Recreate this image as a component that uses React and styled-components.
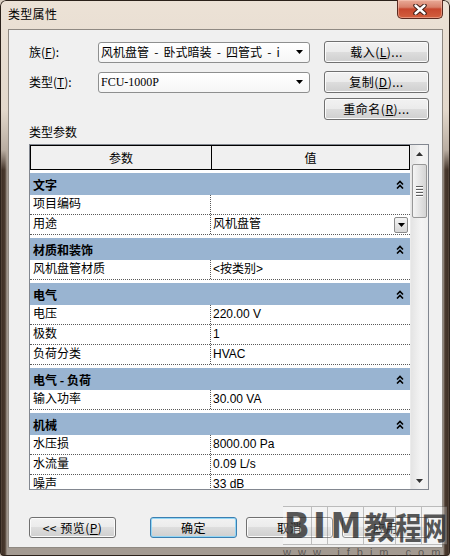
import React from 'react'
import styled, { createGlobalStyle } from 'styled-components'

const GlobalStyle = createGlobalStyle`
  html, body {
    margin: 0;
    padding: 0;
    background: #d9cec1;
  }
  body {
    width: 450px;
    height: 556px;
    overflow: hidden;
    font-family: "Noto Sans CJK SC", "Liberation Sans", sans-serif;
    font-size: 12px;
    color: #000;
  }
`

const Window = styled.div`
  position: relative;
  width: 450px;
  height: 556px;
  box-sizing: border-box;
  overflow: hidden;
  display: flex;
  flex-direction: column;
  padding: 0 7px 8px 8px;
  border-radius: 6px 6px 4px 4px;
  background:
    linear-gradient(to bottom, #ece2d6 0, #e3d8cb 110px, #b9ada1 150px, rgba(74, 58, 46, 0) 170px),
    linear-gradient(to right, #8a7a6c 0, #3f3026 2px, #4b3b2f 5px, #a39a91 7px, #a39a91 443px, #4b3b2f 445px, #3f3026 448px, #8a7a6c 450px);
  box-shadow: inset 0 0 0 1px #2b211a;
`

const TitleBar = styled.div`
  height: 29px;
  flex: none;
  display: flex;
  align-items: flex-start;
  justify-content: space-between;
`

const Title = styled.div`
  margin-top: 6px;
  line-height: 16px;
  font-size: 12px;
  letter-spacing: 0.3px;
  color: #000;
`

const CloseButton = styled.div`
  width: 46px;
  height: 19px;
  box-sizing: border-box;
  display: flex;
  align-items: center;
  justify-content: center;
  border: 1px solid #5a2a20;
  border-top: none;
  border-radius: 0 0 5px 5px;
  background: linear-gradient(to bottom, #e9ab98 0, #d8806a 40%, #c7472e 50%, #d2603f 100%);
  box-shadow: inset 0 0 0 1px rgba(255, 210, 195, 0.45);
`

const Client = styled.div`
  flex: 1;
  display: flex;
  flex-direction: column;
  background: #f0f0f0;
  border: 1px solid #8f8982;
  padding: 11px 13px 9px 20px;
`

const FormRow = styled.div`
  display: flex;
  align-items: center;
  height: 22px;
  margin-bottom: ${p => p.$gap}px;
`

const Label = styled.div`
  width: 69px;
  flex: none;
  font-size: 12px;
  line-height: 16px;
`

const Combo = styled.div`
  width: 212px;
  height: 21px;
  box-sizing: border-box;
  display: flex;
  align-items: center;
  justify-content: space-between;
  padding: 0 6px 0 2px;
  border: 1px solid #8e8f8f;
  border-radius: 3px;
  background: linear-gradient(to bottom, #ffffff 0, #f6f6f6 100%);
`

const ComboText = styled.span`
  flex: 1;
  overflow: hidden;
  white-space: pre;
  font-family: ${p => (p.$serif ? '"Liberation Serif", "Noto Sans CJK SC", serif' : '"Noto Sans CJK SC", sans-serif')};
  font-size: 12px;
  word-spacing: 2.5px;
  line-height: 16px;
`

const Button = styled.div`
  width: ${p => p.$w}px;
  height: ${p => p.$h || 22}px;
  box-sizing: border-box;
  flex: none;
  display: flex;
  align-items: center;
  justify-content: center;
  margin-left: ${p => p.$ml || 0}px;
  border: 1px solid ${p => (p.$default ? '#3c7fb1' : '#707070')};
  border-radius: 3px;
  background: linear-gradient(to bottom, #f2f2f2 0, #ebebeb 50%, #dddddd 50%, #cfcfcf 100%);
  box-shadow: inset 0 0 0 1px ${p => (p.$default ? '#92d6f5' : '#fbfbfb')};
  font-size: 12px;
  line-height: 16px;
  letter-spacing: 0.5px;
`

const SectionLabel = styled.div`
  margin: 4px 0 4px 0;
  line-height: 16px;
  font-size: 12px;
`

const TableFrame = styled.div`
  width: 400px;
  height: 346px;
  box-sizing: border-box;
  flex: none;
  display: flex;
  border: 1px solid #828790;
  background: #fff;
`

const Grid = styled.div`
  width: 381px;
  display: flex;
  flex-direction: column;
`

const Header = styled.div`
  height: 25px;
  box-sizing: border-box;
  flex: none;
  display: flex;
  border: 1px solid #000;
  border-right: none;
  background: #f0f0f0;
`

const HeaderCell = styled.div`
  width: ${p => (p.$w ? `${p.$w}px` : 'auto')};
  flex: ${p => (p.$w ? 'none' : '1')};
  box-sizing: border-box;
  border-right: 1px solid #000;
  text-align: center;
  line-height: 23px;
  font-size: 12px;
`

const Body = styled.div`
  flex: 1;
  overflow: hidden;
  display: flex;
  flex-direction: column;
  font-family: "Liberation Sans", "Noto Sans CJK SC", sans-serif;
`

const Group = styled.div`
  flex: none;
  margin-top: 3px;
  height: 22px;
  display: flex;
  align-items: center;
  justify-content: space-between;
  padding: 0 6px 0 3px;
  background: #99b4d1;
  font-family: "Noto Sans CJK SC", sans-serif;
  font-weight: bold;
  font-size: 12px;
`

const Row = styled.div`
  flex: none;
  height: 20px;
  box-sizing: border-box;
  display: flex;
  border-bottom: 1px dotted #5a5a5a;
`

const NameCell = styled.div`
  width: 181px;
  box-sizing: border-box;
  flex: none;
  padding-left: 3px;
  border-right: 1px dotted #5a5a5a;
  line-height: 19px;
  font-size: 12px;
`

const ValueCell = styled.div`
  flex: 1;
  display: flex;
  align-items: center;
  justify-content: space-between;
  padding-left: 2px;
  padding-right: 2px;
  font-size: 12px;
  line-height: 19px;
`

const DropButton = styled.div`
  width: 14px;
  height: 16px;
  box-sizing: border-box;
  display: flex;
  align-items: center;
  justify-content: center;
  border: 1px solid #8b8b8b;
  border-radius: 2px;
  background: linear-gradient(to bottom, #f4f4f4, #d6d6d6);
`

const ScrollBar = styled.div`
  width: 17px;
  display: flex;
  flex-direction: column;
  border-left: 1px solid #ececec;
  background: linear-gradient(to right, #e4e4e4, #f4f4f4 60%, #efefef);
`

const ScrollArrow = styled.div`
  height: 17px;
  flex: none;
  display: flex;
  align-items: center;
  justify-content: center;
`

const Track = styled.div`
  flex: 1;
`

const Thumb = styled.div`
  margin: 2px 1px 0 1px;
  height: 54px;
  box-sizing: border-box;
  display: flex;
  flex-direction: column;
  align-items: center;
  justify-content: center;
  gap: 2px;
  border: 1px solid #979797;
  border-radius: 2px;
  background: linear-gradient(to right, #f4f4f4, #e6e6e6 45%, #d4d4d4);
`

const Grip = styled.div`
  width: 7px;
  height: 1px;
  background: #5e5e5e;
  box-shadow: 0 1px 0 #fff;
`

const Footer = styled.div`
  margin-top: 27px;
  display: flex;
  justify-content: space-between;
`

const ButtonGroup = styled.div`
  display: flex;
  gap: 9px;
`

const Watermark = styled.div`
  position: absolute;
  left: 283px;
  top: 506px;
  width: 164px;
  pointer-events: none;
`

const MarkRow = styled.div`
  display: flex;
  height: 37px;
  border-top: 1px solid rgba(90, 90, 90, 0.35);
  border-bottom: 1px solid rgba(90, 90, 90, 0.35);
`

const MarkCell = styled.div`
  width: ${p => p.$w}px;
  flex: none;
  box-sizing: border-box;
  border-right: 1px solid rgba(90, 90, 90, 0.35);
  background: rgba(255, 255, 255, 0.25);
  display: flex;
  align-items: center;
  justify-content: center;
  overflow: visible;
  color: rgba(35, 35, 35, 0.75);
  font-weight: bold;
  font-family: ${p => (p.$latin ? '"DejaVu Sans", "Liberation Sans", sans-serif' : '"Noto Sans CJK SC", sans-serif')};
  font-size: ${p => (p.$latin ? 36 : 31)}px;
  line-height: 37px;
  white-space: nowrap;
`

const Glyph = styled.span`
  display: inline-block;
  transform: scaleX(${p => p.$sx || 1});
`

const MarkUrl = styled.div`
  font-family: "Liberation Sans", sans-serif;
  font-size: 11px;
  letter-spacing: 7px;
  white-space: nowrap;
  color: rgba(60, 60, 60, 0.7);
  line-height: 12px;
  margin-top: 1px;
`

const Chevrons = () => (
  <svg width="8" height="9" viewBox="0 0 8 9">
    <polyline points="1,4.5 4,1.5 7,4.5" fill="none" stroke="#000" strokeWidth="1.6" />
    <polyline points="1,8.5 4,5.5 7,8.5" fill="none" stroke="#000" strokeWidth="1.6" />
  </svg>
)

const Tri = ({ up, color = '#000' }) => (
  <svg width="7" height="4" viewBox="0 0 7 4">
    <polygon points={up ? '0,4 7,4 3.5,0' : '0,0 7,0 3.5,4'} fill={color} />
  </svg>
)

const CloseX = () => (
  <svg width="14" height="11" viewBox="0 0 14 11">
    <path d="M2.5 1.5 L11.5 9.5 M11.5 1.5 L2.5 9.5" stroke="#3b1a14" strokeWidth="4.4" strokeLinecap="round" />
    <path d="M2.5 1.5 L11.5 9.5 M11.5 1.5 L2.5 9.5" stroke="#fff" strokeWidth="2.4" strokeLinecap="round" />
  </svg>
)

const groups = [
  {
    title: '文字',
    rows: [
      { name: '项目编码', value: '' },
      { name: '用途', value: '风机盘管', drop: true },
    ],
  },
  { title: '材质和装饰', rows: [{ name: '风机盘管材质', value: '<按类别>' }] },
  {
    title: '电气',
    rows: [
      { name: '电压', value: '220.00 V' },
      { name: '极数', value: '1' },
      { name: '负荷分类', value: 'HVAC' },
    ],
  },
  { title: '电气 - 负荷', rows: [{ name: '输入功率', value: '30.00 VA' }] },
  {
    title: '机械',
    rows: [
      { name: '水压损', value: '8000.00 Pa' },
      { name: '水流量', value: '0.09 L/s' },
      { name: '噪声', value: '33 dB' },
    ],
  },
]

const marks = [
  { ch: 'B', w: 29, latin: true, sx: 0.95 },
  { ch: 'I', w: 16, latin: true },
  { ch: 'M', w: 36, latin: true, sx: 0.85 },
  { ch: '教', w: 32 },
  { ch: '程', w: 26, sx: 0.85 },
  { ch: '网', w: 25, sx: 0.8 },
]

const App = () => {
  return (
    <>
      <GlobalStyle />
      <Window>
        <TitleBar>
          <Title>类型属性</Title>
          <CloseButton>
            <CloseX />
          </CloseButton>
        </TitleBar>

        <Client>
          <FormRow $gap={8}>
            <Label>族(<u>F</u>):</Label>
            <Combo>
              <ComboText>风机盘管 - 卧式暗装 - 四管式 - i</ComboText>
              <Tri />
            </Combo>
            <Button $w={105} $ml={14}>载入(<u>L</u>)...</Button>
          </FormRow>
          <FormRow $gap={5}>
            <Label>类型(<u>T</u>):</Label>
            <Combo>
              <ComboText $serif>FCU-1000P</ComboText>
              <Tri />
            </Combo>
            <Button $w={105} $ml={14}>复制(<u>D</u>)...</Button>
          </FormRow>
          <FormRow $gap={0}>
            <Button $w={105} $ml={295}>重命名(<u>R</u>)...</Button>
          </FormRow>

          <SectionLabel>类型参数</SectionLabel>

          <TableFrame>
            <Grid>
              <Header>
                <HeaderCell $w={181}>参数</HeaderCell>
                <HeaderCell>值</HeaderCell>
              </Header>
              <Body>
                {groups.map(g => (
                  <React.Fragment key={g.title}>
                    <Group>
                      <span>{g.title}</span>
                      <Chevrons />
                    </Group>
                    {g.rows.map(r => (
                      <Row key={r.name}>
                        <NameCell>{r.name}</NameCell>
                        <ValueCell>
                          <span>{r.value}</span>
                          {r.drop && (
                            <DropButton>
                              <Tri />
                            </DropButton>
                          )}
                        </ValueCell>
                      </Row>
                    ))}
                  </React.Fragment>
                ))}
              </Body>
            </Grid>
            <ScrollBar>
              <ScrollArrow>
                <Tri up color="#333" />
              </ScrollArrow>
              <Track>
                <Thumb>
                  <Grip />
                  <Grip />
                  <Grip />
                  <Grip />
                </Thumb>
              </Track>
              <ScrollArrow>
                <Tri color="#333" />
              </ScrollArrow>
            </ScrollBar>
          </TableFrame>

          <Footer>
            <Button $w={87} $h={21}>&lt;&lt; 预览(<u>P</u>)</Button>
            <ButtonGroup>
              <Button $w={87} $h={21} $default>确定</Button>
              <Button $w={87} $h={21}>取消</Button>
              <Button $w={87} $h={21}>应用</Button>
            </ButtonGroup>
          </Footer>
        </Client>

        <Watermark>
          <MarkRow>
            {marks.map(m => (
              <MarkCell key={m.ch} $w={m.w} $latin={m.latin}>
                <Glyph $sx={m.sx}>{m.ch}</Glyph>
              </MarkCell>
            ))}
          </MarkRow>
          <MarkUrl>www.ifbim.com</MarkUrl>
        </Watermark>
      </Window>
    </>
  )
}

export default App
